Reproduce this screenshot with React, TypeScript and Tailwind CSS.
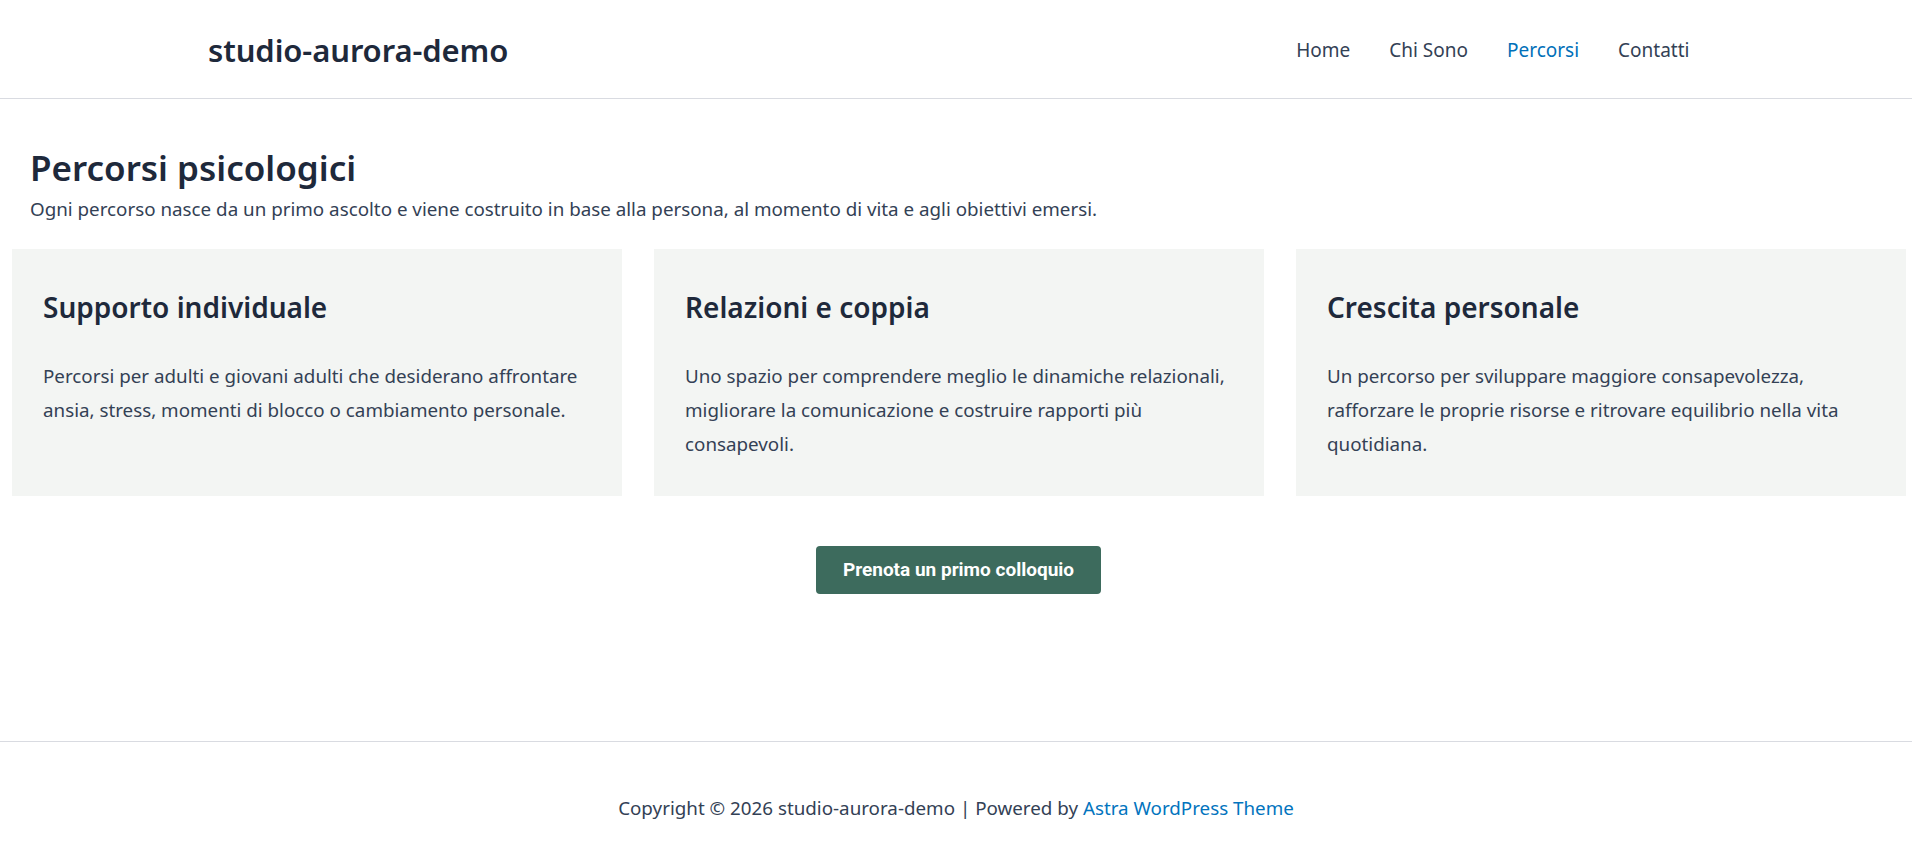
const navItems = [
  { label: "Home", active: false },
  { label: "Chi Sono", active: false },
  { label: "Percorsi", active: true },
  { label: "Contatti", active: false },
];

// each entry is one line of the card copy, broken as on the live page
const services = [
  {
    title: "Supporto individuale",
    lines: [
      "Percorsi per adulti e giovani adulti che desiderano affrontare",
      "ansia, stress, momenti di blocco o cambiamento personale.",
    ],
  },
  {
    title: "Relazioni e coppia",
    lines: [
      "Uno spazio per comprendere meglio le dinamiche relazionali,",
      "migliorare la comunicazione e costruire rapporti più",
      "consapevoli.",
    ],
  },
  {
    title: "Crescita personale",
    lines: [
      "Un percorso per sviluppare maggiore consapevolezza,",
      "rafforzare le proprie risorse e ritrovare equilibrio nella vita",
      "quotidiana.",
    ],
  },
];

function SiteHeader() {
  return (
    <header className="h-[99px] border-b border-[#d9dbe1] bg-white">
      <div className="ml-[208px] mr-[203px] flex h-full items-center justify-between pt-[3px]">
        <a className="text-[31px] font-semibold text-[#1e293b] tracking-[-0.1px]">studio-aurora-demo</a>
        <nav className="flex items-center">
          {navItems.map((item) => (
            <a
              key={item.label}
              className={`px-[19.5px] text-[19px] ${item.active ? "text-[#0170b9]" : "text-[#334155]"}`}
            >
              {item.label}
            </a>
          ))}
        </nav>
      </div>
    </header>
  );
}

function ServiceCard({ title, lines }: { title: string; lines: string[] }) {
  return (
    <div className="bg-[#f3f5f3] px-[31px] pt-[41px] pb-[35px]">
      <h3 className="text-[28px] font-semibold leading-[34px] text-[#1e293b]">{title}</h3>
      <p className="mt-[35px] text-[18.8px] leading-[34px] text-[#334155]">
        {lines.map((line) => (
          <span key={line} className="block whitespace-nowrap">
            {line}
          </span>
        ))}
      </p>
    </div>
  );
}

export default function App() {
  return (
    <div className="min-h-screen bg-white font-['Noto_Sans',sans-serif]">
      <SiteHeader />

      <main className="pt-[46px]">
        <div className="px-[30px]">
          <h1 className="text-[35px] font-semibold leading-[46px] text-[#1e293b]">Percorsi psicologici</h1>
          <p className="mt-[4px] text-[18.8px] leading-[28px] text-[#334155]">
            Ogni percorso nasce da un primo ascolto e viene costruito in base alla persona, al momento di vita e agli
            obiettivi emersi.
          </p>
        </div>

        <div className="mt-[26px] ml-[12px] mr-[6px] grid grid-cols-3 gap-[32px]">
          {services.map((s) => (
            <ServiceCard key={s.title} title={s.title} lines={s.lines} />
          ))}
        </div>

        <div className="mt-[50px] flex justify-center pl-[5px]">
          <a className="flex h-[48px] items-center rounded-[4px] bg-[#3d6b5d] px-[27px] font-['Roboto',sans-serif] text-[19px] font-bold text-white">
            Prenota un primo colloquio
          </a>
        </div>
      </main>

      <footer className="mt-[147px] border-t border-[#d9dbe1]">
        <p className="pt-[52px] pb-[40px] text-center text-[18.8px] leading-[28px] text-[#334155]">
          Copyright © 2026 studio-aurora-demo | Powered by <a className="text-[#0274be]">Astra WordPress Theme</a>
        </p>
      </footer>
    </div>
  );
}
